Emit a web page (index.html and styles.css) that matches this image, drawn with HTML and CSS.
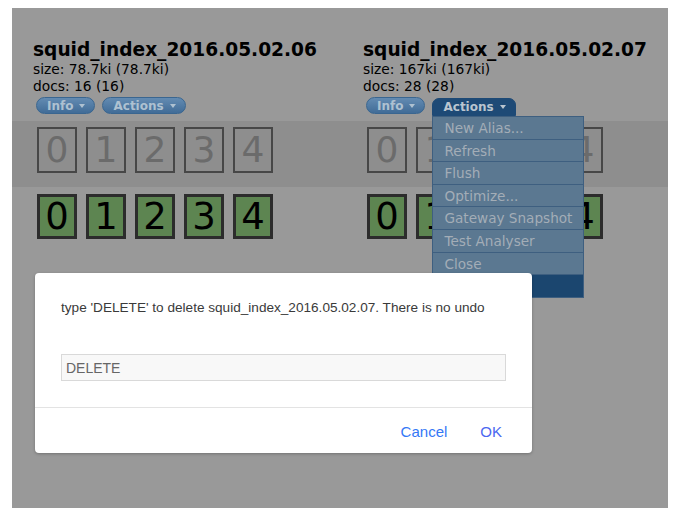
FILE: index.html
```html
<!DOCTYPE html>
<html lang="en">
<head>
    <meta charset="UTF-8">
    <title>Cluster Overview</title>
    <link rel="stylesheet" href="styles.css">
</head>
<body>
    <div class="screen">
        <div class="header">
            <div class="col">
                <h2 class="title">squid_index_2016.05.02.06</h2>
                <div class="stat">size: 78.7ki (78.7ki)</div>
                <div class="stat">docs: 16 (16)</div>
                <div class="buttons">
                    <span class="btn">Info <i class="caret"></i></span>
                    <span class="btn">Actions <i class="caret"></i></span>
                </div>
            </div>
            <div class="col">
                <h2 class="title">squid_index_2016.05.02.07</h2>
                <div class="stat">size: 167ki (167ki)</div>
                <div class="stat">docs: 28 (28)</div>
                <div class="buttons">
                    <span class="btn">Info <i class="caret"></i></span>
                    <div class="dropdown">
                        <span class="btn open">Actions <i class="caret"></i></span>
                        <ul class="menu">
                            <li>New Alias...</li>
                            <li>Refresh</li>
                            <li>Flush</li>
                            <li>Optimize...</li>
                            <li>Gateway Snapshot</li>
                            <li>Test Analyser</li>
                            <li>Close</li>
                            <li class="active">Delete...</li>
                        </ul>
                    </div>
                </div>
            </div>
        </div>

        <!-- replica shards -->
        <div class="band">
            <div class="col">
                <div class="shards">
                    <div class="shard">0</div><div class="shard">1</div><div class="shard">2</div><div class="shard">3</div><div class="shard">4</div>
                </div>
            </div>
            <div class="col">
                <div class="shards">
                    <div class="shard">0</div><div class="shard">1</div><div class="shard">2</div><div class="shard">3</div><div class="shard">4</div>
                </div>
            </div>
        </div>

        <!-- primary shards -->
        <div class="primaries">
            <div class="col">
                <div class="shards">
                    <div class="shard on">0</div><div class="shard on">1</div><div class="shard on">2</div><div class="shard on">3</div><div class="shard on">4</div>
                </div>
            </div>
            <div class="col">
                <div class="shards">
                    <div class="shard on">0</div><div class="shard on">1</div><div class="shard on">2</div><div class="shard on">3</div><div class="shard on">4</div>
                </div>
            </div>
        </div>

        <div class="dialog">
            <div class="dialog-body">
                <p class="prompt">type 'DELETE' to delete squid_index_2016.05.02.07. There is no undo</p>
                <input class="prompt-input" type="text" value="DELETE" readonly>
            </div>
            <div class="dialog-footer">
                <button class="link">Cancel</button>
                <button class="link ok">OK</button>
            </div>
        </div>
    </div>
</body>
</html>
```

FILE: styles.css
```css
/* General */
body {
    margin: 0;
    background: #fff;
    font-family: "DejaVu Sans", Verdana, sans-serif;
    color: #000;
}

.screen {
    position: relative;
    margin: 8px 0 0 12px;
    width: 656px;
    height: 500px;
    background: #999;
    overflow: hidden;
}

.col {
    flex-shrink: 0;
    width: 330px;
}

/* Index header */
.header {
    display: flex;
    height: 113px;
    box-sizing: border-box;
    padding: 31px 0 0 21px;
}

.title {
    margin: 0;
    font-size: 18.6px;
    font-weight: bold;
    line-height: 22px;
    white-space: nowrap;
}

.stat {
    font-size: 13.8px;
    line-height: 17px;
}

.buttons {
    display: flex;
    align-items: flex-start;
    gap: 7px;
    margin: 2px 0 0 3px;
}

.btn {
    display: inline-flex;
    align-items: center;
    gap: 6px;
    height: 17px;
    box-sizing: border-box;
    padding: 0 9px 0 10px;
    border: 1px solid #3a6690;
    border-radius: 9px;
    background: linear-gradient(#638bb2, #416c97);
    color: #aec1d1;
    font-size: 12px;
    font-weight: bold;
}

.caret {
    width: 0;
    height: 0;
    border-left: 3.5px solid transparent;
    border-right: 3.5px solid transparent;
    border-top: 4px solid currentColor;
}

.dropdown { position: relative; margin-top: 1px; }

.btn.open {
    display: flex;
    height: 18px;
    border-color: #1e4a76;
    border-radius: 7px 7px 0 0;
    background: #1e4a76;
    color: #bac5d0;
}

.menu {
    position: absolute;
    top: 100%;
    left: 0;
    z-index: 1;
    width: 152px;
    margin: 0;
    padding: 0;
    list-style: none;
    box-sizing: border-box;
    background: #5b7891;
    border: 1px solid #3e5f80;
    border-bottom: none;
}

.menu li {
    height: 21.6px;
    line-height: 22.6px;
    padding-left: 11px;
    border-bottom: 1px solid #3e5f80;
    font-size: 13.6px;
    color: #a3adb7;
    white-space: nowrap;
}

.menu li.active { background: #1b466f; }

/* Shards */
.band,
.primaries {
    display: flex;
    padding-left: 21px;
}

.band {
    height: 66px;
    box-sizing: border-box;
    padding-top: 6px;
    background: #8e8e8e;
}

.primaries { padding-top: 7px; }

.shards {
    display: flex;
    gap: 9px;
    margin-left: 4px;
}

.shard {
    display: flex;
    align-items: center;
    justify-content: center;
    width: 40px;
    height: 46px;
    box-sizing: border-box;
    border: 2px solid #474747;
    color: #6b6b6b;
    font-size: 36px;
    line-height: 1;
}

.shard.on {
    height: 45px;
    border: 3px solid #2c2c2c;
    background: #5d8551;
    color: #000;
    font-size: 37px;
}

/* Confirm dialog */
.dialog {
    position: absolute;
    left: 23px;
    top: 265px;
    z-index: 2;
    width: 497px;
    height: 180px;
    background: #fff;
    border-radius: 4px;
    box-shadow: 0 1px 3px rgba(0,0,0,0.25);
    font-family: "Liberation Sans", Arial, sans-serif;
}

.dialog-body {
    padding: 27px 26px 26px;
    border-bottom: 1px solid #e3e3e3;
}

.prompt {
    margin: 0 0 38px;
    font-size: 13.6px;
    line-height: 16px;
    color: #3a3a3a;
}

.prompt-input {
    display: block;
    width: 100%;
    height: 27px;
    box-sizing: border-box;
    margin: 0;
    padding: 0 4px;
    border: 1px solid #d9d9d9;
    background: #f8f8f8;
    font-family: inherit;
    font-size: 14px;
    color: #666;
    outline: none;
}

.dialog-footer {
    display: flex;
    justify-content: flex-end;
    gap: 33px;
    padding: 15px 30px 0;
}

.link {
    padding: 0;
    border: none;
    background: none;
    font-family: inherit;
    font-size: 15px;
    line-height: 18px;
    color: #3478f6;
    cursor: pointer;
}

.link.ok { color: #4a68f0; }
```
